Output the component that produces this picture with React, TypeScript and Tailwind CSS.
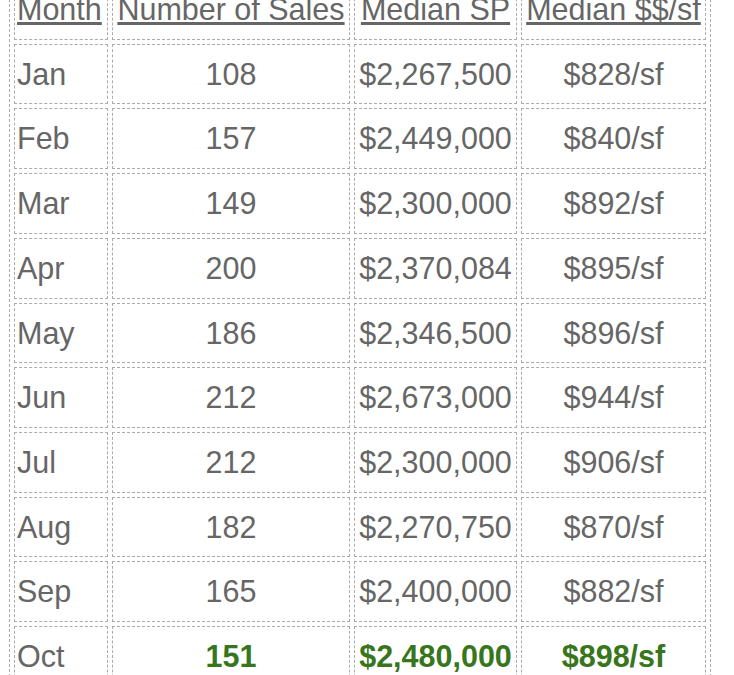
const rows: { month: string; sales: string; median: string; perSf: string }[] = [
  { month: "Jan", sales: "108", median: "$2,267,500", perSf: "$828/sf" },
  { month: "Feb", sales: "157", median: "$2,449,000", perSf: "$840/sf" },
  { month: "Mar", sales: "149", median: "$2,300,000", perSf: "$892/sf" },
  { month: "Apr", sales: "200", median: "$2,370,084", perSf: "$895/sf" },
  { month: "May", sales: "186", median: "$2,346,500", perSf: "$896/sf" },
  { month: "Jun", sales: "212", median: "$2,673,000", perSf: "$944/sf" },
  { month: "Jul", sales: "212", median: "$2,300,000", perSf: "$906/sf" },
  { month: "Aug", sales: "182", median: "$2,270,750", perSf: "$870/sf" },
  { month: "Sep", sales: "165", median: "$2,400,000", perSf: "$882/sf" },
];

const cell =
  "border border-dashed border-[#ababab] py-[12px] px-[2px] leading-[34.7px] whitespace-nowrap";

export default function App() {
  return (
    <div className="h-[675px] overflow-hidden bg-white">
      <table
        className="ml-[9px] mt-[-26px] table-fixed border-separate border-spacing-[4px] border border-dashed border-[#ababab] text-[30.5px] text-[#666666]"
        style={{ fontFamily: '"Liberation Sans", Arial, sans-serif' }}
      >
        <colgroup>
          <col className="w-[94px]" />
          <col className="w-[238px]" />
          <col className="w-[163px]" />
          <col className="w-[185px]" />
        </colgroup>
        <thead>
          <tr>
            <th className={`${cell} text-left font-normal underline`}>Month</th>
            <th className={`${cell} text-center font-normal underline`}>Number of Sales</th>
            <th className={`${cell} text-center font-normal underline`}>Median SP</th>
            <th className={`${cell} text-center font-normal underline`}>Median $$/sf</th>
          </tr>
        </thead>
        <tbody>
          {rows.map((r) => (
            <tr key={r.month}>
              <td className={`${cell} text-left`}>{r.month}</td>
              <td className={`${cell} text-center`}>{r.sales}</td>
              <td className={`${cell} text-center`}>{r.median}</td>
              <td className={`${cell} text-center`}>{r.perSf}</td>
            </tr>
          ))}
          <tr>
            <td className={`${cell} text-left`}>Oct</td>
            <td className={`${cell} text-center font-bold text-[#38761d]`}>151</td>
            <td className={`${cell} text-center font-bold text-[#38761d]`}>$2,480,000</td>
            <td className={`${cell} text-center font-bold text-[#38761d]`}>$898/sf</td>
          </tr>
        </tbody>
      </table>
    </div>
  );
}
